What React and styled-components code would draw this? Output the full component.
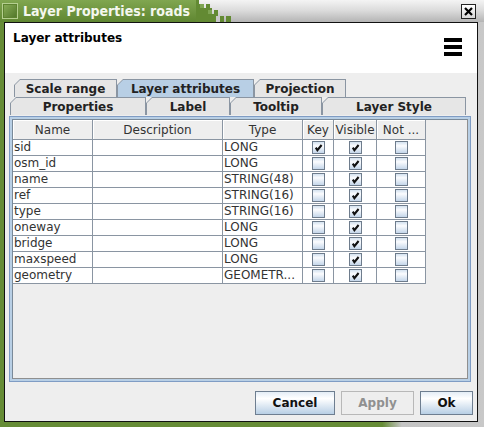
import React from 'react';
import styled, { createGlobalStyle } from 'styled-components';

const Global = createGlobalStyle`
  html, body { margin: 0; padding: 0; background: #eeeeee; }
  body { font-family: "DejaVu Sans", "Liberation Sans", sans-serif; }
`;

const Window = styled.div`
  width: 484px;
  height: 427px;
  box-sizing: border-box;
  display: flex;
  flex-direction: column;
  padding: 0 6px 5px 4px;
  background: linear-gradient(to right, #668c36 0%, #668c36 79%, #c4c4c4 83%, #c8c8c8 100%);
  overflow: hidden;
`;

const TitleBar = styled.div`
  height: 22px;
  margin: 0 -6px 0 -4px;
  display: flex;
  flex-shrink: 0;
`;

const TitleGreen = styled.div`
  width: 194px;
  display: flex;
  align-items: center;
  gap: 5px;
  padding-left: 2px;
  background: linear-gradient(#80a650, #5f8631);
`;

const AppIcon = styled.div`
  width: 14px;
  height: 14px;
  border: 1px solid #b5cf90;
  background: linear-gradient(135deg, #8bb05a, #4f7427);
  box-shadow: inset 0 0 0 1px #5d8230;
`;

const TitleText = styled.span`
  color: #f4f7ee;
  font-family: "DejaVu Sans Condensed", "DejaVu Sans", sans-serif;
  font-stretch: condensed;
  font-weight: bold;
  font-size: 14px;
  white-space: nowrap;
`;

const TitleGrey = styled.div`
  flex: 1;
  display: flex;
  align-items: center;
  justify-content: flex-end;
  padding-right: 8px;
  background: linear-gradient(#f4f4f4, #dadada 50%, #b4b4b4);
`;

const Dither = styled.svg`
  display: block;
  flex-shrink: 0;
  margin-right: auto;
`;

const CloseBtn = styled.div`
  width: 13px;
  height: 13px;
  border: 1px solid #222;
  background: linear-gradient(#ffffff, #d8d8d8);
  display: flex;
  align-items: center;
  justify-content: center;
`;

const Frame = styled.div`
  flex: 1;
  display: flex;
  flex-direction: column;
  border: 1px solid #111;
  background: #eeeeee;
  min-height: 0;
`;

const Header = styled.div`
  height: 50px;
  background: #ffffff;
  display: flex;
  justify-content: space-between;
  padding: 8px 0 0 8px;
  box-sizing: border-box;
  font-weight: bold;
  font-size: 12px;
  color: #000;
`;

const Menu = styled.div`
  width: 18px;
  margin: 7px 15px 0 0;
  display: flex;
  flex-direction: column;
  gap: 3px;
  span {
    height: 4px;
    background: #000;
  }
`;

const Main = styled.div`
  flex: 1;
  display: flex;
  flex-direction: column;
  padding: 6px 4px 5px 4px;
  min-height: 0;
`;

const TabRow = styled.div`
  display: flex;
  height: 18px;
  padding-left: ${p => p.$indent}px;
`;

const TabOuter = styled.div`
  width: ${p => p.$w}px;
  height: 18px;
  flex-shrink: 0;
  position: relative;
  background: #8a95a2;
  clip-path: polygon(6px 0, 100% 0, 100% 100%, 0 100%, 0 6px);
`;

const TabInner = styled.div`
  position: absolute;
  inset: 1px 1px 0 1px;
  background: ${p => (p.$selected ? '#b8cfe5' : '#e6e6e6')};
  clip-path: polygon(5px 0, 100% 0, 100% 100%, 0 100%, 0 5px);
  display: flex;
  align-items: center;
  justify-content: center;
  font-weight: bold;
  font-size: 12px;
  color: #222;
  padding-top: 1px;
`;

const Panel = styled.div`
  height: 266px;
  margin: 1px 2px 0 0;
  box-sizing: border-box;
  border: 1px solid #7f9cc4;
  padding: 2px;
  background: #b8cfe5;
  display: flex;
`;

const ScrollPane = styled.div`
  flex: 1;
  border: 1px solid #7a8a99;
  border-right-color: #8f8f8f;
  border-bottom-color: #8f8f8f;
  background: #eeeeee;
`;

const Grid = styled.div`
  display: grid;
  grid-template-columns: 80px 130px 80px 31px 43px 49px;
  width: 413px;
`;

const HeadCell = styled.div`
  height: 20px;
  box-sizing: border-box;
  border-right: 1px solid #8a95a2;
  border-bottom: 1px solid #8a95a2;
  background: #eeeeee;
  box-shadow: inset 1px 1px 0 #ffffff;
  font-size: 12px;
  color: #333;
  display: flex;
  align-items: center;
  justify-content: center;
  white-space: nowrap;
`;

const Cell = styled.div`
  height: 16px;
  box-sizing: border-box;
  border-right: 1px solid #8a95a2;
  border-bottom: 1px solid #8a95a2;
  background: #ffffff;
  font-size: 12px;
  color: #333;
  padding-left: 1px;
  line-height: 15px;
  white-space: nowrap;
  overflow: hidden;
  display: flex;
  align-items: center;
  justify-content: ${p => (p.$center ? 'center' : 'flex-start')};
`;

const Box = styled.div`
  width: 11px;
  height: 11px;
  border: 1px solid #6e7c8c;
  background: linear-gradient(#d4e2f0, #fbfcfe 35%, #c4d6ea);
  display: flex;
  align-items: center;
  justify-content: center;
`;

const ButtonBar = styled.div`
  display: flex;
  justify-content: flex-end;
  gap: 6px;
  margin-top: 9px;
`;

const Button = styled.div`
  width: ${p => p.$w}px;
  height: 24px;
  box-sizing: border-box;
  border: 1px solid ${p => (p.$disabled ? '#b8b8b8' : '#6e7e90')};
  background: ${p => (p.$disabled ? '#eeeeee' : 'linear-gradient(#e4edf6, #ffffff 30%, #b8cfe5)')};
  color: ${p => (p.$disabled ? '#909090' : '#111')};
  font-weight: bold;
  font-size: 12px;
  display: flex;
  align-items: center;
  justify-content: center;
`;

const Check = () => (
  <svg width="9" height="9" viewBox="0 0 9 9">
    <path d="M1.8 4.6 L3.4 7.2 L7.6 2" stroke="#111" strokeWidth="2.1" fill="none" strokeLinecap="butt" />
  </svg>
);

const CheckBox = ({ on }) => <Box>{on && <Check />}</Box>;

const rows = [
  ['sid', 'LONG', true],
  ['osm_id', 'LONG', false],
  ['name', 'STRING(48)', false],
  ['ref', 'STRING(16)', false],
  ['type', 'STRING(16)', false],
  ['oneway', 'LONG', false],
  ['bridge', 'LONG', false],
  ['maxspeed', 'LONG', false],
  ['geometry', 'GEOMETR...', false],
];

const backTabs = [
  ['Scale range', 103],
  ['Layer attributes', 137, true],
  ['Projection', 92],
];

const frontTabs = [
  ['Properties', 136],
  ['Label', 84],
  ['Tooltip', 92],
  ['Layer Style', 144],
];

const Tab = ({ label, w, selected }) => (
  <TabOuter $w={w}>
    <TabInner $selected={selected}>{label}</TabInner>
  </TabOuter>
);

// stair-step blocks where the green title fades into grey
const dither = [
  [0, 0, 3, 4], [0, 4, 8, 4], [10, 4, 4, 4], [0, 8, 16, 6], [18, 10, 4, 4],
  [0, 14, 22, 8], [24, 16, 4, 6], [30, 16, 5, 6],
];

export default function App() {
  return (
    <>
      <Global />
      <Window>
        <TitleBar>
          <TitleGreen>
            <AppIcon />
            <TitleText>Layer Properties: roads</TitleText>
          </TitleGreen>
          <TitleGrey>
            <Dither width="38" height="22" viewBox="0 0 38 22">
              {dither.map(([x, y, w, h], i) => (
                <rect key={i} x={x} y={y} width={w} height={h} fill="#638a33" />
              ))}
              <rect x="4" y="4" width="4" height="4" fill="#7ea452" />
              <rect x="12" y="10" width="4" height="4" fill="#7ea452" />
              <rect x="20" y="16" width="4" height="6" fill="#c8c8c8" />
            </Dither>
            <CloseBtn>
              <svg width="9" height="9" viewBox="0 0 9 9">
                <path d="M1 1 L8 8 M8 1 L1 8" stroke="#000" strokeWidth="2.2" />
              </svg>
            </CloseBtn>
          </TitleGrey>
        </TitleBar>
        <Frame>
          <Header>
            <span>Layer attributes</span>
            <Menu>
              <span />
              <span />
              <span />
            </Menu>
          </Header>
          <Main>
            <TabRow $indent={5}>
              {backTabs.map(([l, w, s]) => (
                <Tab key={l} label={l} w={w} selected={s} />
              ))}
            </TabRow>
            <TabRow $indent={1}>
              {frontTabs.map(([l, w]) => (
                <Tab key={l} label={l} w={w} />
              ))}
            </TabRow>
            <Panel>
              <ScrollPane>
                <Grid>
                  <HeadCell>Name</HeadCell>
                  <HeadCell>Description</HeadCell>
                  <HeadCell>Type</HeadCell>
                  <HeadCell>Key</HeadCell>
                  <HeadCell>Visible</HeadCell>
                  <HeadCell>Not ...</HeadCell>
                  {rows.map(([name, type, key]) => (
                    <React.Fragment key={name}>
                      <Cell>{name}</Cell>
                      <Cell />
                      <Cell>{type}</Cell>
                      <Cell $center><CheckBox on={key} /></Cell>
                      <Cell $center><CheckBox on /></Cell>
                      <Cell $center><CheckBox /></Cell>
                    </React.Fragment>
                  ))}
                </Grid>
              </ScrollPane>
            </Panel>
            <ButtonBar>
              <Button $w={80}>Cancel</Button>
              <Button $w={73} $disabled>Apply</Button>
              <Button $w={53}>Ok</Button>
            </ButtonBar>
          </Main>
        </Frame>
      </Window>
    </>
  );
}
